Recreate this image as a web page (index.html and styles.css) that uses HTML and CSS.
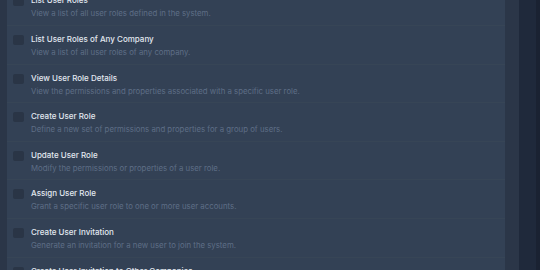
FILE: index.html
```html
<html>

<head>
    <link rel="stylesheet" href="styles.css">
</head>

<body>
    <div class="layout">
        <div class="edge"></div>
        <div class="panel">
            <ul class="perm-list">
                <li class="perm">
                    <span class="box"></span>
                    <div class="perm-text">
                        <div class="perm-title">List User Roles</div>
                        <div class="perm-desc">View a list of all user roles defined in the system.</div>
                    </div>
                </li>
                <li class="perm">
                    <span class="box"></span>
                    <div class="perm-text">
                        <div class="perm-title">List User Roles of Any Company</div>
                        <div class="perm-desc">View a list of all user roles of any company.</div>
                    </div>
                </li>
                <li class="perm">
                    <span class="box"></span>
                    <div class="perm-text">
                        <div class="perm-title">View User Role Details</div>
                        <div class="perm-desc">View the permissions and properties associated with a specific user role.</div>
                    </div>
                </li>
                <li class="perm">
                    <span class="box"></span>
                    <div class="perm-text">
                        <div class="perm-title">Create User Role</div>
                        <div class="perm-desc">Define a new set of permissions and properties for a group of users.</div>
                    </div>
                </li>
                <li class="perm">
                    <span class="box"></span>
                    <div class="perm-text">
                        <div class="perm-title">Update User Role</div>
                        <div class="perm-desc">Modify the permissions or properties of a user role.</div>
                    </div>
                </li>
                <li class="perm">
                    <span class="box"></span>
                    <div class="perm-text">
                        <div class="perm-title">Assign User Role</div>
                        <div class="perm-desc">Grant a specific user role to one or more user accounts.</div>
                    </div>
                </li>
                <li class="perm">
                    <span class="box"></span>
                    <div class="perm-text">
                        <div class="perm-title">Create User Invitation</div>
                        <div class="perm-desc">Generate an invitation for a new user to join the system.</div>
                    </div>
                </li>
                <li class="perm">
                    <span class="box"></span>
                    <div class="perm-text">
                        <div class="perm-title">Create User Invitation to Other Companies</div>
                        <div class="perm-desc">Invite a new user to join any other company in the system.</div>
                    </div>
                </li>
            </ul>
        </div>
        <div class="gutter"></div>
        <div class="side"></div>
        <div class="edge-right"></div>
    </div>
</body>

</html>
```

FILE: styles.css
```css
body,
html {
    margin: 0;
    width: 100%;
    height: 100%;
    overflow: hidden;
    background: #1f293b;
    font-family: Inter, "Noto Sans", sans-serif;
}

.layout {
    display: flex;
    height: 100%;
}

.edge {
    width: 7px;
    background: #2b3648;
}

.panel {
    width: 498px;
    background: #334155;
    overflow: hidden;
}

.gutter {
    width: 14px;
    background: #2b3648;
}

.side {
    width: 17px;
    background: #1f293b;
}

.edge-right {
    flex: 1;
    background: #1a2232;
}

.perm-list {
    list-style: none;
    margin: -12.6px 0 0 0;
    padding: 0;
}

.perm {
    display: flex;
    align-items: flex-start;
    gap: 7px;
    height: 38.6px;
    box-sizing: border-box;
    padding: 8px 0 0 6px;
    border-bottom: 1px solid #374556;
}

.box {
    width: 11px;
    height: 10px;
    margin-top: 1px;
    border-radius: 2px;
    background: #2a3546;
}

.perm-title {
    font-size: 8px;
    line-height: 11px;
    font-weight: 500;
    color: #e2e8f0;
}

.perm-desc {
    margin-top: 2px;
    font-size: 7.8px;
    line-height: 10px;
    color: #5e6e86;
}
```
